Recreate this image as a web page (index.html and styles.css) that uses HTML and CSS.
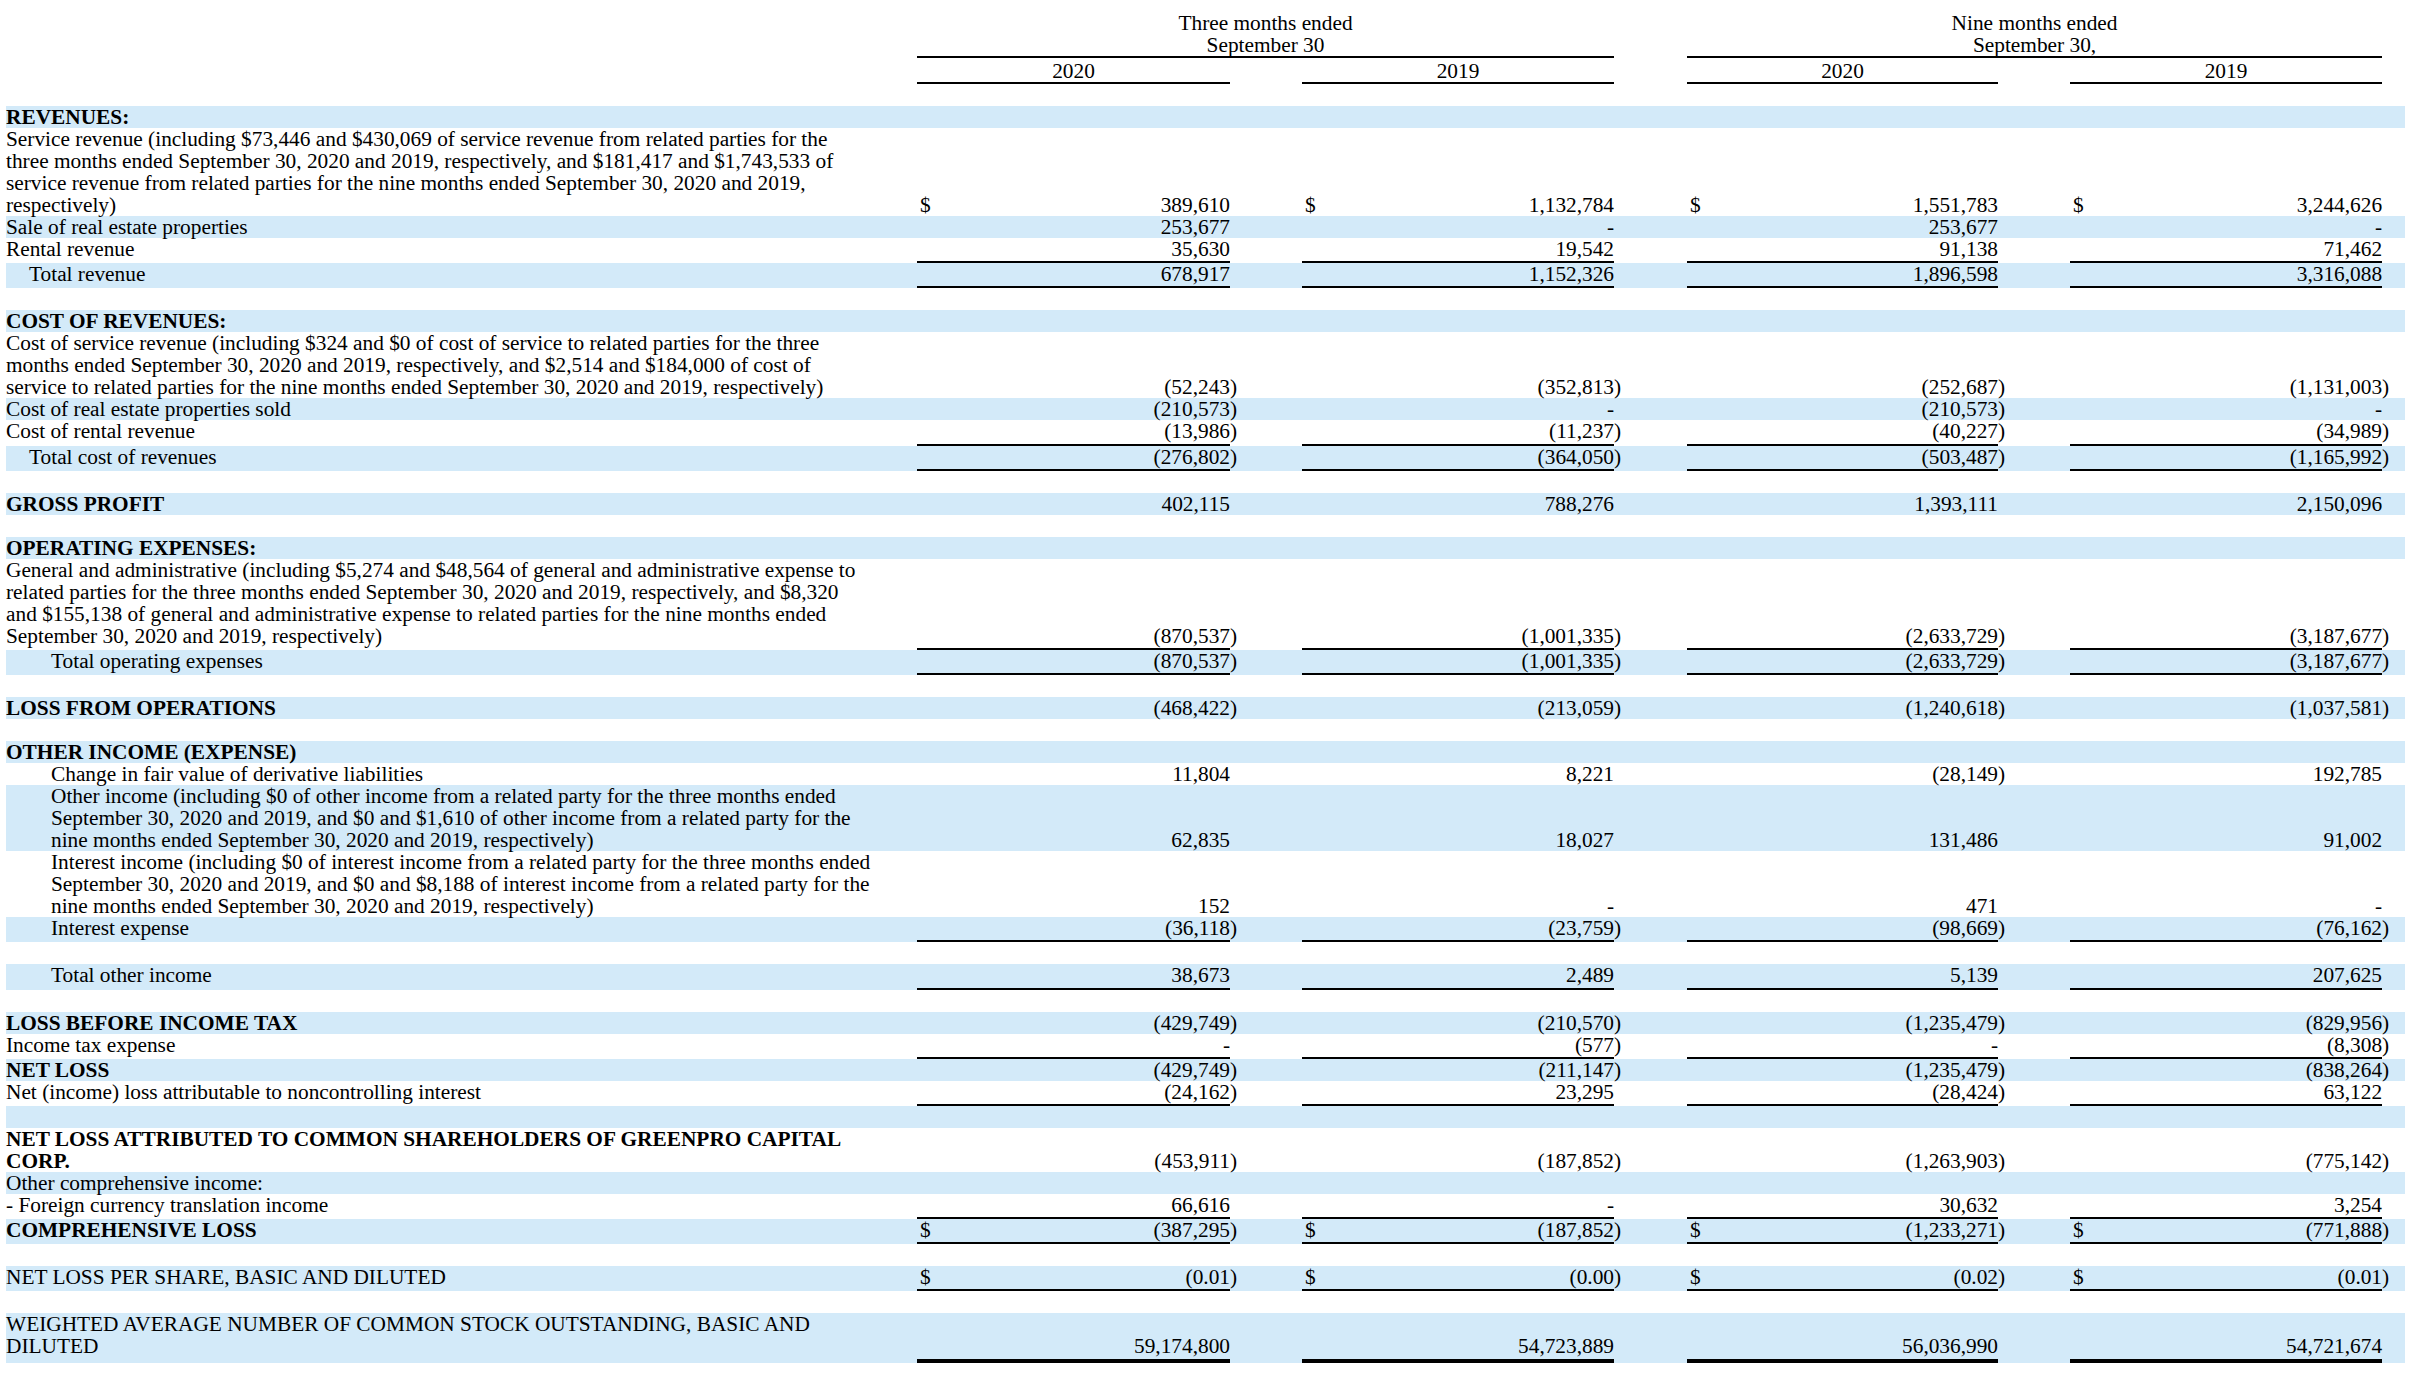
FILE: index.html
```html
<!DOCTYPE html>
<html lang="en">
<head>
<meta charset="utf-8">
<title>Consolidated Statements of Operations</title>
<link rel="stylesheet" href="styles.css">
</head>
<body>
<div class="page">
<table class="is">
  <colgroup>
    <col class="c-label">
    <col class="c-v1">
    <col class="c-g1">
    <col class="c-v2">
    <col class="c-g2">
    <col class="c-v3">
    <col class="c-g3">
    <col class="c-v4">
    <col class="c-end">
  </colgroup>
  <tbody>
    <tr class="h1">
      <td></td>
      <td colspan="3" class="hd">Three months ended<br>September 30</td>
      <td></td>
      <td colspan="3" class="hd">Nine months ended<br>September 30,</td>
      <td></td>
    </tr>
    <tr class="h2">
      <td></td>
      <td class="hd">2020</td><td></td>
      <td class="hd">2019</td><td></td>
      <td class="hd">2020</td><td></td>
      <td class="hd">2019</td><td></td>
    </tr>
    <tr class="blank"><td colspan="9"></td></tr>

    <tr class="s"><td class="lbl b">REVENUES:</td><td colspan="8"></td></tr>
    <tr>
      <td class="lbl">Service revenue (including $73,446 and $430,069 of service revenue from related parties for the<br>three months ended September 30, 2020 and 2019, respectively, and $181,417 and $1,743,533 of<br>service revenue from related parties for the nine months ended September 30, 2020 and 2019,<br>respectively)</td>
      <td class="v"><span class="cur">$</span>389,610</td><td class="p"></td>
      <td class="v"><span class="cur">$</span>1,132,784</td><td class="p"></td>
      <td class="v"><span class="cur">$</span>1,551,783</td><td class="p"></td>
      <td class="v"><span class="cur">$</span>3,244,626</td><td class="p"></td>
    </tr>
    <tr class="s">
      <td class="lbl">Sale of real estate properties</td>
      <td class="v">253,677</td><td class="p"></td>
      <td class="v">-</td><td class="p"></td>
      <td class="v">253,677</td><td class="p"></td>
      <td class="v">-</td><td class="p"></td>
    </tr>
    <tr class="ul">
      <td class="lbl">Rental revenue</td>
      <td class="v">35,630</td><td class="p"></td>
      <td class="v">19,542</td><td class="p"></td>
      <td class="v">91,138</td><td class="p"></td>
      <td class="v">71,462</td><td class="p"></td>
    </tr>
    <tr class="s ul">
      <td class="lbl i1">Total revenue</td>
      <td class="v">678,917</td><td class="p"></td>
      <td class="v">1,152,326</td><td class="p"></td>
      <td class="v">1,896,598</td><td class="p"></td>
      <td class="v">3,316,088</td><td class="p"></td>
    </tr>
    <tr class="blank"><td colspan="9"></td></tr>

    <tr class="s"><td class="lbl b">COST OF REVENUES:</td><td colspan="8"></td></tr>
    <tr>
      <td class="lbl">Cost of service revenue (including $324 and $0 of cost of service to related parties for the three<br>months ended September 30, 2020 and 2019, respectively, and $2,514 and $184,000 of cost of<br>service to related parties for the nine months ended September 30, 2020 and 2019, respectively)</td>
      <td class="v">(52,243</td><td class="p">)</td>
      <td class="v">(352,813</td><td class="p">)</td>
      <td class="v">(252,687</td><td class="p">)</td>
      <td class="v">(1,131,003</td><td class="p">)</td>
    </tr>
    <tr class="s">
      <td class="lbl">Cost of real estate properties sold</td>
      <td class="v">(210,573</td><td class="p">)</td>
      <td class="v">-</td><td class="p"></td>
      <td class="v">(210,573</td><td class="p">)</td>
      <td class="v">-</td><td class="p"></td>
    </tr>
    <tr class="ul">
      <td class="lbl">Cost of rental revenue</td>
      <td class="v">(13,986</td><td class="p">)</td>
      <td class="v">(11,237</td><td class="p">)</td>
      <td class="v">(40,227</td><td class="p">)</td>
      <td class="v">(34,989</td><td class="p">)</td>
    </tr>
    <tr class="s ul">
      <td class="lbl i1">Total cost of revenues</td>
      <td class="v">(276,802</td><td class="p">)</td>
      <td class="v">(364,050</td><td class="p">)</td>
      <td class="v">(503,487</td><td class="p">)</td>
      <td class="v">(1,165,992</td><td class="p">)</td>
    </tr>
    <tr class="blank"><td colspan="9"></td></tr>

    <tr class="s">
      <td class="lbl b">GROSS PROFIT</td>
      <td class="v">402,115</td><td class="p"></td>
      <td class="v">788,276</td><td class="p"></td>
      <td class="v">1,393,111</td><td class="p"></td>
      <td class="v">2,150,096</td><td class="p"></td>
    </tr>
    <tr class="blank"><td colspan="9"></td></tr>

    <tr class="s"><td class="lbl b">OPERATING EXPENSES:</td><td colspan="8"></td></tr>
    <tr class="ul">
      <td class="lbl">General and administrative (including $5,274 and $48,564 of general and administrative expense to<br>related parties for the three months ended September 30, 2020 and 2019, respectively, and $8,320<br>and $155,138 of general and administrative expense to related parties for the nine months ended<br>September 30, 2020 and 2019, respectively)</td>
      <td class="v">(870,537</td><td class="p">)</td>
      <td class="v">(1,001,335</td><td class="p">)</td>
      <td class="v">(2,633,729</td><td class="p">)</td>
      <td class="v">(3,187,677</td><td class="p">)</td>
    </tr>
    <tr class="s ul">
      <td class="lbl i2">Total operating expenses</td>
      <td class="v">(870,537</td><td class="p">)</td>
      <td class="v">(1,001,335</td><td class="p">)</td>
      <td class="v">(2,633,729</td><td class="p">)</td>
      <td class="v">(3,187,677</td><td class="p">)</td>
    </tr>
    <tr class="blank"><td colspan="9"></td></tr>

    <tr class="s">
      <td class="lbl b">LOSS FROM OPERATIONS</td>
      <td class="v">(468,422</td><td class="p">)</td>
      <td class="v">(213,059</td><td class="p">)</td>
      <td class="v">(1,240,618</td><td class="p">)</td>
      <td class="v">(1,037,581</td><td class="p">)</td>
    </tr>
    <tr class="blank"><td colspan="9"></td></tr>

    <tr class="s"><td class="lbl b">OTHER INCOME (EXPENSE)</td><td colspan="8"></td></tr>
    <tr>
      <td class="lbl i2">Change in fair value of derivative liabilities</td>
      <td class="v">11,804</td><td class="p"></td>
      <td class="v">8,221</td><td class="p"></td>
      <td class="v">(28,149</td><td class="p">)</td>
      <td class="v">192,785</td><td class="p"></td>
    </tr>
    <tr class="s">
      <td class="lbl i2">Other income (including $0 of other income from a related party for the three months ended<br>September 30, 2020 and 2019, and $0 and $1,610 of other income from a related party for the<br>nine months ended September 30, 2020 and 2019, respectively)</td>
      <td class="v">62,835</td><td class="p"></td>
      <td class="v">18,027</td><td class="p"></td>
      <td class="v">131,486</td><td class="p"></td>
      <td class="v">91,002</td><td class="p"></td>
    </tr>
    <tr>
      <td class="lbl i2">Interest income (including $0 of interest income from a related party for the three months ended<br>September 30, 2020 and 2019, and $0 and $8,188 of interest income from a related party for the<br>nine months ended September 30, 2020 and 2019, respectively)</td>
      <td class="v">152</td><td class="p"></td>
      <td class="v">-</td><td class="p"></td>
      <td class="v">471</td><td class="p"></td>
      <td class="v">-</td><td class="p"></td>
    </tr>
    <tr class="s ul">
      <td class="lbl i2">Interest expense</td>
      <td class="v">(36,118</td><td class="p">)</td>
      <td class="v">(23,759</td><td class="p">)</td>
      <td class="v">(98,669</td><td class="p">)</td>
      <td class="v">(76,162</td><td class="p">)</td>
    </tr>
    <tr class="blank"><td colspan="9"></td></tr>

    <tr class="s ul">
      <td class="lbl i2">Total other income</td>
      <td class="v">38,673</td><td class="p"></td>
      <td class="v">2,489</td><td class="p"></td>
      <td class="v">5,139</td><td class="p"></td>
      <td class="v">207,625</td><td class="p"></td>
    </tr>
    <tr class="blank"><td colspan="9"></td></tr>

    <tr class="s">
      <td class="lbl b">LOSS BEFORE INCOME TAX</td>
      <td class="v">(429,749</td><td class="p">)</td>
      <td class="v">(210,570</td><td class="p">)</td>
      <td class="v">(1,235,479</td><td class="p">)</td>
      <td class="v">(829,956</td><td class="p">)</td>
    </tr>
    <tr class="ul">
      <td class="lbl">Income tax expense</td>
      <td class="v">-</td><td class="p"></td>
      <td class="v">(577</td><td class="p">)</td>
      <td class="v">-</td><td class="p"></td>
      <td class="v">(8,308</td><td class="p">)</td>
    </tr>
    <tr class="s">
      <td class="lbl b">NET LOSS</td>
      <td class="v">(429,749</td><td class="p">)</td>
      <td class="v">(211,147</td><td class="p">)</td>
      <td class="v">(1,235,479</td><td class="p">)</td>
      <td class="v">(838,264</td><td class="p">)</td>
    </tr>
    <tr class="ul">
      <td class="lbl">Net (income) loss attributable to noncontrolling interest</td>
      <td class="v">(24,162</td><td class="p">)</td>
      <td class="v">23,295</td><td class="p"></td>
      <td class="v">(28,424</td><td class="p">)</td>
      <td class="v">63,122</td><td class="p"></td>
    </tr>
    <tr class="blank s"><td colspan="9"></td></tr>

    <tr>
      <td class="lbl b">NET LOSS ATTRIBUTED TO COMMON SHAREHOLDERS OF GREENPRO CAPITAL<br>CORP.</td>
      <td class="v">(453,911</td><td class="p">)</td>
      <td class="v">(187,852</td><td class="p">)</td>
      <td class="v">(1,263,903</td><td class="p">)</td>
      <td class="v">(775,142</td><td class="p">)</td>
    </tr>
    <tr class="s"><td class="lbl">Other comprehensive income:</td><td colspan="8"></td></tr>
    <tr class="ul">
      <td class="lbl">- Foreign currency translation income</td>
      <td class="v">66,616</td><td class="p"></td>
      <td class="v">-</td><td class="p"></td>
      <td class="v">30,632</td><td class="p"></td>
      <td class="v">3,254</td><td class="p"></td>
    </tr>
    <tr class="s ul">
      <td class="lbl b">COMPREHENSIVE LOSS</td>
      <td class="v"><span class="cur">$</span>(387,295</td><td class="p">)</td>
      <td class="v"><span class="cur">$</span>(187,852</td><td class="p">)</td>
      <td class="v"><span class="cur">$</span>(1,233,271</td><td class="p">)</td>
      <td class="v"><span class="cur">$</span>(771,888</td><td class="p">)</td>
    </tr>
    <tr class="blank"><td colspan="9"></td></tr>

    <tr class="s ul">
      <td class="lbl">NET LOSS PER SHARE, BASIC AND DILUTED</td>
      <td class="v"><span class="cur">$</span>(0.01</td><td class="p">)</td>
      <td class="v"><span class="cur">$</span>(0.00</td><td class="p">)</td>
      <td class="v"><span class="cur">$</span>(0.02</td><td class="p">)</td>
      <td class="v"><span class="cur">$</span>(0.01</td><td class="p">)</td>
    </tr>
    <tr class="blank"><td colspan="9"></td></tr>

    <tr class="s ul dbl">
      <td class="lbl">WEIGHTED AVERAGE NUMBER OF COMMON STOCK OUTSTANDING, BASIC AND<br>DILUTED</td>
      <td class="v">59,174,800</td><td class="p"></td>
      <td class="v">54,723,889</td><td class="p"></td>
      <td class="v">56,036,990</td><td class="p"></td>
      <td class="v">54,721,674</td><td class="p"></td>
    </tr>
  </tbody>
</table>
</div>
</body>
</html>
```

FILE: styles.css
```css
html, body {
  margin: 0;
  padding: 0;
  background: #ffffff;
}

body {
  font-family: "Times New Roman", "Liberation Serif", serif;
  font-size: 21.33px;
  color: #000000;
}

.page {
  padding: 12px 0 0 6px;
}

.is {
  border-collapse: separate;
  border-spacing: 0;
  table-layout: fixed;
  width: 2399px;
  line-height: 22px;
}

.c-label { width: 911px; }
.c-v1 { width: 313px; }
.c-g1 { width: 72px; }
.c-v2 { width: 312px; }
.c-g2 { width: 73px; }
.c-v3 { width: 311px; }
.c-g3 { width: 72px; }
.c-v4 { width: 312px; }
.c-end { width: 23px; }

.is td {
  padding: 0;
  vertical-align: bottom;
}

.lbl {
  padding-left: 2px;
  white-space: nowrap;
}

.b { font-weight: bold; }

.is td.i1 { padding-left: 23px; }
.is td.i2 { padding-left: 45px; }

.is td.v {
  text-align: right;
  padding-left: 3px;
  white-space: nowrap;
}

.cur {
  float: left;
}

.is td.p {
  text-align: left;
  white-space: nowrap;
}

.s {
  background: #d3eaf9;
}

.blank td {
  height: 22px;
}

.hd {
  text-align: center;
  border-bottom: 2px solid #000000;
}

.h2 td {
  padding-top: 2px;
}

.is .ul td {
  padding-bottom: 1.2px;
  border-bottom: 2px solid transparent;
}

.is .ul td.v {
  border-bottom-color: #000000;
}

.is .dbl td {
  border-bottom-width: 4px;
}
```
